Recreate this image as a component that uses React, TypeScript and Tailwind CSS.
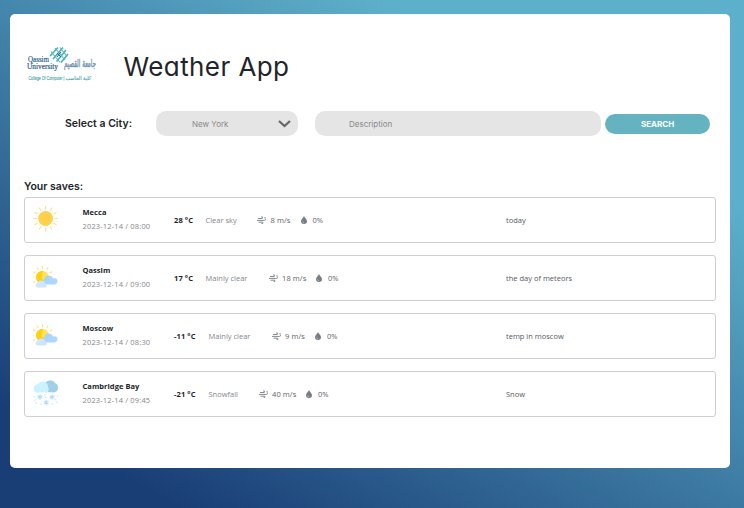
import React from "react";

type Icon = "sun" | "cloud" | "snow";
type Save = {
  city: string;
  date: string;
  temp: string;
  sky: string;
  wind: string;
  note: string;
  icon: Icon;
  tempW: string;
  skyW: string;
  windW: string;
};

const saves: Save[] = [
  { city: "Mecca", date: "2023-12-14 / 08:00", temp: "28 °C", sky: "Clear sky", wind: "8 m/s", note: "today", icon: "sun", tempW: "w-[31.5px]", skyW: "w-[51.5px]", windW: "w-[30px]" },
  { city: "Qassim", date: "2023-12-14 / 09:00", temp: "17 °C", sky: "Mainly clear", wind: "18 m/s", note: "the day of meteors", icon: "cloud", tempW: "w-[31.5px]", skyW: "w-[63px]", windW: "w-[34px]" },
  { city: "Moscow", date: "2023-12-14 / 08:30", temp: "-11 °C", sky: "Mainly clear", wind: "9 m/s", note: "temp in moscow", icon: "cloud", tempW: "w-[34.5px]", skyW: "w-[63px]", windW: "w-[30px]" },
  { city: "Cambridge Bay", date: "2023-12-14 / 09:45", temp: "-21 °C", sky: "Snowfall", wind: "40 m/s", note: "Snow", icon: "snow", tempW: "w-[34.5px]", skyW: "w-[50px]", windW: "w-[34px]" },
];

const rays = [0, 30, 60, 90, 120, 150, 180, 210, 240, 270, 300, 330];
const flakes = [[7, 17], [13.2, 22.6], [19.2, 17]];
const dots = [[1.5, 17], [13, 17.5], [24.5, 16], [3, 23], [8, 24], [19.5, 24], [24, 22], [12, 14.8], [2, 20], [22.5, 19.5]];

function Weather({ icon }: { icon: Icon }) {
  if (icon === "sun")
    return (
      <svg viewBox="0 0 26 26" className="size-[26px]">
        <circle cx="12.6" cy="12.5" r="7.4" fill="#ffd04b" />
        {rays.map((a) => (
          <path key={a} d="M12.6 .3v2.6" transform={`rotate(${a} 12.6 12.5)`} stroke="#ffdf85" strokeWidth="1.1" strokeLinecap="round" />
        ))}
      </svg>
    );
  if (icon === "cloud")
    return (
      <svg viewBox="0 0 26 26" className="mt-px size-[26px]">
        {[150, 180, 210, 240, 270, 300, 330].map((a) => (
          <path key={a} d="M18.3 12.2h2" transform={`rotate(${a} 9.5 12.2)`} stroke="#ffe27a" strokeWidth="1" strokeLinecap="round" />
        ))}
        <circle cx="9.6" cy="12.2" r="6.3" fill="#ffe45a" />
        <path d="M10.5 6a6.3 6.3 0 1 0 2 11.6A7.5 7.5 0 0 1 10.5 6Z" fill="#ffd110" />
        <path d="M12 19.4a3 3 0 0 1-1-5.2 5 5 0 0 1 9.3-.8 3.1 3.1 0 1 1 1.2 6Z" fill="#a8d3ff" opacity=".92" />
        <path d="M4.2 22.6a2.4 2.4 0 0 1 .2-4.6 4.2 4.2 0 0 1 8 1.1 1.8 1.8 0 0 1 .2 3.5Z" fill="#cfe6ff" />
      </svg>
    );
  return (
    <svg viewBox="0 0 26 26" className="size-[26px]">
      <path d="M12 12V3.5A5.8 5.8 0 0 1 22 3a4.9 4.9 0 0 1-1.2 9.4Z" fill="#a1cfe7" />
      <path d="M4 12.6a4.2 4.2 0 0 1 .7-8.3 5.6 5.6 0 0 1 10.2 1.2q1.6 3.2 0 7.1Z" fill="#ccf1ff" />
      {flakes.map(([x, y]) => (
        <g key={x} stroke="#b0def5" strokeWidth="1.2" strokeLinecap="round" transform={`translate(${x} ${y})`}>
          <path d="M0-2.2v4.4M-1.9-1.1l3.8 2.2M-1.9 1.1l3.8-2.2" />
        </g>
      ))}
      {dots.map(([x, y]) => (
        <circle key={`${x}-${y}`} cx={x} cy={y} r=".85" fill="#c5ebfc" />
      ))}
    </svg>
  );
}

function Wind() {
  return (
    <svg viewBox="0 0 9 8" className="h-[8px] w-[9px]" fill="none" stroke="#858993" strokeWidth="1">
      <path d="M1 2.5h4.3V.9H4.2M0 4.4h7.6a1 1 0 0 0 .4-1.9V1M1.5 6.2h4.3v1.3H4.6" />
    </svg>
  );
}

function Drop() {
  return (
    <svg viewBox="0 0 12 16" className="h-[8px] w-[6px] shrink-0">
      <path d="M6 0C5 4 0 6 0 10.5a6 5.5 0 0 0 12 0C12 6 7 4 6 0Z" fill="#777c87" />
      <path d="M3 10.5a3 3 0 0 0 3 2.8" stroke="#c9ccd2" strokeWidth="1.2" fill="none" />
    </svg>
  );
}

function Logo() {
  return (
    <svg viewBox="0 0 72 38" className="h-[38px] w-[72px] overflow-visible">
      <g stroke="#43aeb3" strokeWidth="1.5" fill="none">
        <path d="M24 9l8-8.5M27 12l10-11.5M30.5 14.5l9.5-11.5M35 15.5l7-8.5" />
        <path d="M25 4.5l9 11M29 1l10 12M34 .5l7 9" stroke="#59b9bc" strokeWidth="1.1" />
        <path d="M31 6l4 4M35 5l-4 5" stroke="#246f94" strokeWidth="1" />
      </g>
      <g fill="#265b85" fontFamily="'Liberation Serif', serif" stroke="#265b85" strokeWidth=".2">
        <text x="2" y="14.5" fontSize="9" textLength="21" lengthAdjust="spacingAndGlyphs">Qassim</text>
        <text x="1" y="22" fontSize="8" textLength="31" lengthAdjust="spacingAndGlyphs">University</text>
      </g>
      <text x="38" y="20" fontSize="11" fill="#5f87a4" stroke="#7e9db5" strokeWidth=".5" direction="ltr" fontFamily="'DejaVu Sans', sans-serif" textLength="32" lengthAdjust="spacingAndGlyphs">جامعة القصيم</text>
      <g fill="#3aa7ab" stroke="#3aa7ab" strokeWidth=".12" fontSize="5.4">
        <text x="2.5" y="33" fontFamily="'Liberation Sans', sans-serif" textLength="34" lengthAdjust="spacingAndGlyphs">College Of Computer</text>
        <path d="M38 28.8v5" strokeWidth=".5" />
        <text x="39.5" y="33" textLength="25.5" lengthAdjust="spacingAndGlyphs" fontFamily="'DejaVu Sans', sans-serif">كلية الحاسب</text>
      </g>
    </svg>
  );
}

export default function App() {
  return (
    <div className="h-[508px] w-[744px] overflow-hidden bg-[linear-gradient(30deg,#193e76_11%,#5db0cb_78%)] px-[10px] pt-[14px] font-['Open_Sans','Noto_Sans',sans-serif] text-[#212529]">
      <main className="h-[454px] w-[720px] rounded-[5px] bg-white px-[14px] pt-[31px]">
        <header className="flex h-[42px] items-center">
          <div className="w-[99.5px] pl-[2px]"><Logo /></div>
          <h1 className="whitespace-nowrap pt-[2px] font-['Inter',sans-serif] text-[26px] leading-[42px] tracking-[0.42px] [font-feature-settings:'cv11']">Weather App</h1>
        </header>

        <form className="mt-[24px] flex h-[25px] items-center font-['Inter',sans-serif]">
          <label className="w-[132px] whitespace-nowrap pl-[41px] text-[10.5px] font-semibold">Select a City:</label>
          <div className="flex h-[25px] w-[142px] items-center justify-between rounded-[10px] bg-[#e5e5e5] pl-[36px] pr-[7px] text-[8px] text-[#888]">
            <span>New York</span>
            <svg viewBox="0 0 13 8" className="h-[8px] w-[13px]"><path d="M1 1l5.5 5L12 1" fill="none" stroke="#666" strokeWidth="2.2" /></svg>
          </div>
          <div className="ml-[17px] flex h-[25px] w-[286px] items-center rounded-[10px] bg-[#e5e5e5] pl-[34px] text-[8px] text-[#888]">Description</div>
          <button type="button" className="ml-[4px] h-[20px] w-[105px] rounded-[10px] bg-[#65b3c0] text-[8px] font-bold text-white">SEARCH</button>
        </form>

        <h2 className="mt-[43px] h-[18px] font-['Inter',sans-serif] text-[10.5px] font-semibold leading-[16px]">Your saves:</h2>
        <section className="flex flex-col gap-[12px]">
          {saves.map((s) => (
            <article key={s.city} className="flex h-[46px] w-[692px] rounded-[3px] border border-[#cfcfcf] text-[7.5px] leading-[12px]">
              <div className="w-[57.5px] pl-[8px] pt-[8px]"><Weather icon={s.icon} /></div>
              <div className="w-[91.5px] whitespace-nowrap pt-[8px]">
                <div className="font-bold tracking-[0.04px]">{s.city}</div>
                <div className="mt-[2px] tracking-[0.16px] text-[#84878e]">{s.date}</div>
              </div>
              <div className="flex h-[44px] w-[332px] items-center whitespace-nowrap text-[#5e626a]">
                <span className={`${s.tempW} font-bold tracking-[0.1px] text-[#212529]`}>{s.temp}</span>
                <span className={`${s.skyW} text-[#84878e]`}>{s.sky}</span>
                <span className="w-[13.5px]"><Wind /></span>
                <span className={`${s.windW} tracking-[0.1px]`}>{s.wind}</span>
                <span className="w-[12px]"><Drop /></span>
                <span>0%</span>
              </div>
              <div className="flex items-center whitespace-nowrap text-[#565a60]">{s.note}</div>
            </article>
          ))}
        </section>
      </main>
    </div>
  );
}
